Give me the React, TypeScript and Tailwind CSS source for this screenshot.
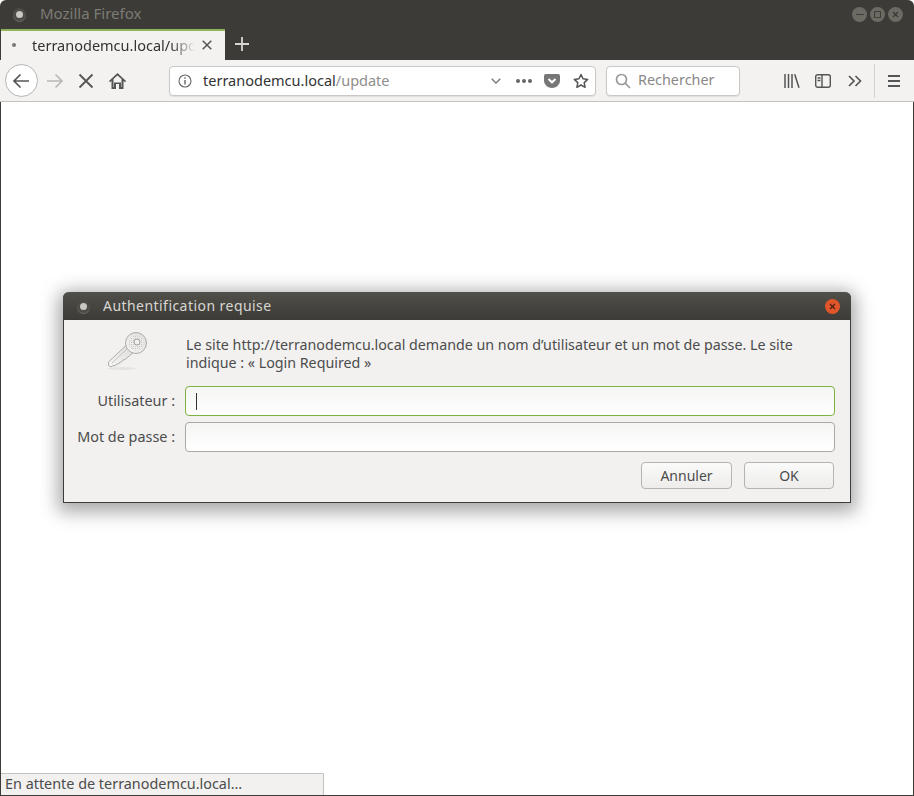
const font = "font-['Noto_Sans',sans-serif]";

function WindowButtons() {
  return (
    <div className="flex items-center gap-[3px]">
      <div className="w-[15px] h-[15px] rounded-full bg-[#6b6a63] flex items-center justify-center">
        <div className="w-[8px] h-[1px] bg-[#3f3e39]" />
      </div>
      <div className="w-[15px] h-[15px] rounded-full bg-[#6b6a63] flex items-center justify-center">
        <div className="w-[7px] h-[7px] border border-[#3f3e39]" />
      </div>
      <div className="w-[15px] h-[15px] rounded-full bg-[#6b6a63] flex items-center justify-center">
        <svg width="7" height="7" viewBox="0 0 7 7" stroke="#3a3935" strokeWidth="1.2">
          <path d="M1 1l5 5M6 1l-5 5" />
        </svg>
      </div>
    </div>
  );
}

function AppDot() {
  return (
    <div className="w-[13px] h-[13px] rounded-full bg-[#4d4c46] flex items-center justify-center shadow-[0_1px_0_#6a6963]">
      <div className="w-[7px] h-[7px] rounded-full bg-[#c9c8c2]" />
    </div>
  );
}

function Toolbar() {
  return (
    <div className="h-[42px] bg-[#f3f2f1] border-b border-[#c4c3c0] flex items-center shrink-0 relative">
      <div className="w-[33px] h-[33px] ml-[5px] rounded-full bg-white border border-[#b5b4b1] flex items-center justify-center">
        <svg className="-ml-[2px]" width="18" height="16" viewBox="0 0 18 16" fill="none" stroke="#555" strokeWidth="1.7">
          <path d="M17 8H2M8.500 1.500L2 8l6.500 6.500" />
        </svg>
      </div>
      <svg className="ml-[8px]" width="18" height="16" viewBox="0 0 18 16" fill="none" stroke="#b9b8b5" strokeWidth="1.7">
        <path d="M1 8h15M9.500 1.500L16 8l-6.500 6.500" />
      </svg>
      <svg className="ml-[14px]" width="16" height="16" viewBox="0 0 16 16" fill="none" stroke="#555" strokeWidth="1.8">
        <path d="M1.500 1.500l13 13M14.500 1.500l-13 13" />
      </svg>
      <svg className="ml-[15px]" width="17" height="16" viewBox="0 0 17 16" fill="#555">
        <path d="M8.500 0L0 8l1 1.200 1.500-1.300V16h4.500v-5h3v5H14.500V7.900L16 9.200 17 8zM4.500 14V6.100l4-3.700 4 3.700V14H12V9.500H5V14z" fillRule="evenodd" />
      </svg>

      <div className="ml-[43px] w-[427px] h-[30px] bg-white border border-[#c9c8c5] rounded-[4px] flex items-center shadow-[0_1px_1px_rgba(0,0,0,0.08)]">
        <svg className="ml-[8px]" width="14" height="14" viewBox="0 0 14 14" fill="none" stroke="#666" strokeWidth="1.100">
          <circle cx="7" cy="7" r="6" />
          <path d="M7 6v4.500M7 3.300v1.400" strokeWidth="1.400" />
        </svg>
        <span className="ml-[11px] text-[14.5px] leading-none text-[#333] whitespace-nowrap">
          terranodemcu.local<span className="text-[#8f8e8c]">/update</span>
        </span>
        <svg className="ml-auto" width="10" height="6" viewBox="0 0 10 6" fill="none" stroke="#777" strokeWidth="1.300">
          <path d="M.7.700L5 5l4.300-4.300" />
        </svg>
        <div className="ml-[15px] flex gap-[2px]">
          <div className="w-[4px] h-[4px] rounded-full bg-[#666]" />
          <div className="w-[4px] h-[4px] rounded-full bg-[#666]" />
          <div className="w-[4px] h-[4px] rounded-full bg-[#666]" />
        </div>
        <svg className="ml-[12px]" width="16" height="14" viewBox="0 0 16 14">
          <path d="M2 0h12a2 2 0 0 1 2 2v4.500C16 11 12 14 8 14S0 11 0 6.500V2a2 2 0 0 1 2-2z" fill="#777" />
          <path d="M4.500 5L8 8.300 11.500 5" fill="none" stroke="#fff" strokeWidth="2" />
        </svg>
        <svg className="ml-[13px] mr-[6px]" width="16" height="16" viewBox="0 0 16 16" fill="none" stroke="#555" strokeWidth="1.500">
          <path d="M8 1.500l2 4.300 4.700.6-3.500 3.200.9 4.700L8 12l-4.100 2.300.9-4.700L1.300 6.400 6 5.800z" strokeLinejoin="round" />
        </svg>
      </div>

      <div className="ml-[10px] w-[134px] h-[30px] bg-white border border-[#c9c8c5] rounded-[4px] flex items-center shadow-[0_1px_1px_rgba(0,0,0,0.08)]">
        <svg className="ml-[8px]" width="16" height="16" viewBox="0 0 16 16" fill="none" stroke="#9b9a98" strokeWidth="1.700">
          <circle cx="6.500" cy="6.500" r="5" />
          <path d="M10.200 10.200L15 15" />
        </svg>
        <span className="ml-[7px] text-[14.4px] leading-none text-[#8a8987]">Rechercher</span>
      </div>

      <svg className="ml-[44px]" width="16" height="14" viewBox="0 0 16 14" stroke="#555" strokeWidth="1.500" fill="none">
        <path d="M1 0v14M4.500 0v14M8 0v14M10.700.3l4.300 13.500" />
      </svg>
      <svg className="ml-[15px]" width="16" height="14" viewBox="0 0 16 14" fill="none" stroke="#555" strokeWidth="1.400">
        <rect x=".7" y=".7" width="14.600" height="12.600" rx="2" />
        <path d="M7 .7v12.600M2.500 4h3M2.500 6.500h3" />
      </svg>
      <svg className="ml-[17px]" width="14" height="12" viewBox="0 0 14 12" fill="none" stroke="#555" strokeWidth="1.700">
        <path d="M1 1l5 5-5 5M7.500 1l5 5-5 5" />
      </svg>
      <div className="ml-[12px] w-[1px] h-[34px] bg-[#d3d2cf]" />
      <div className="ml-[13px] w-[12px] flex flex-col gap-[3px]">
        <div className="h-[2px] bg-[#555]" />
        <div className="h-[2px] bg-[#555]" />
        <div className="h-[2px] bg-[#555]" />
      </div>
    </div>
  );
}

function KeyIcon() {
  return (
    <svg width="42" height="42" viewBox="0 0 42 42">
      <defs>
        <linearGradient id="keyg" x1="0" y1="1" x2="1" y2="0">
          <stop offset="0" stopColor="#f6f6f4" />
          <stop offset="1" stopColor="#dcdbd8" />
        </linearGradient>
        <pattern id="keyh" width="2" height="2" patternUnits="userSpaceOnUse">
          <rect width="2" height="2" fill="#eeedeb" />
          <rect width="1" height="1" fill="#c6c5c1" />
        </pattern>
      </defs>
      <ellipse cx="15" cy="38.500" rx="14" ry="1.500" fill="#e4e3e1" />
      <path
        d="M20.500 14L1.500 32v3.500L4 37l2-1.500 2 .5 1.500-2h2l1.500-2h1.500l1.500-2 2-.5L27 22z"
        fill="url(#keyg)"
        stroke="#aeada9"
        strokeLinejoin="round"
      />
      <path d="M5 33l15-14" stroke="#c4c3bf" fill="none" />
      <circle cx="29" cy="13" r="10.500" fill="url(#keyg)" stroke="#aeada9" />
      <circle cx="29" cy="13" r="7.500" fill="url(#keyh)" />
      <circle cx="30" cy="12" r="3" fill="#f0efed" stroke="#a3a29e" />
    </svg>
  );
}

function Field({ label, focused }: { label: string; focused?: boolean }) {
  return (
    <div className="flex items-center">
      <span className="w-[111px] text-right text-[14.4px] text-[#4c4c4c] whitespace-nowrap">{label}</span>
      <div
        className={
          focused
            ? "ml-[10px] w-[650px] h-[30px] rounded-[4px] border border-[#7cb342] bg-gradient-to-b from-[#f5f5f4] to-white flex items-center"
            : "ml-[10px] w-[650px] h-[30px] rounded-[4px] border border-[#aaa9a6] bg-gradient-to-b from-[#f5f5f4] to-white flex items-center"
        }
      >
        {focused && <div className="ml-[10px] w-[1px] h-[17px] bg-[#333]" />}
      </div>
    </div>
  );
}

function DialogButton({ label }: { label: string }) {
  return (
    <div className="h-[27px] rounded-[4px] border border-[#b5b4b1] bg-gradient-to-b from-[#fafafa] to-[#eeedeb] flex items-center justify-center text-[14px] text-[#4c4c4c]">
      {label}
    </div>
  );
}

function AuthDialog() {
  return (
    <div className="absolute left-[63px] top-[292px] w-[788px] h-[211px] rounded-t-[6px] border border-[#3d3c38] border-t-0 bg-[#f2f1f0] shadow-[0_4px_18px_5px_rgba(0,0,0,0.34)] flex flex-col">
      <div className="h-[28px] -mx-[1px] rounded-t-[6px] bg-gradient-to-b from-[#504f49] to-[#3c3b37] flex items-center shrink-0">
        <div className="ml-[14px]">
          <AppDot />
        </div>
        <span className="ml-[13px] pb-[1px] text-[14px] tracking-[0.45px] text-[#d8d7d3]">Authentification requise</span>
        <div className="ml-auto mr-[11px] w-[15px] h-[15px] rounded-full bg-[#e0552a] flex items-center justify-center">
          <svg width="7" height="7" viewBox="0 0 7 7" stroke="#4a2010" strokeWidth="1.200">
            <path d="M1 1l5 5M6 1l-5 5" />
          </svg>
        </div>
      </div>
      <div className="flex pt-[10px] shrink-0">
        <div className="ml-[43px] w-[42px]">
          <KeyIcon />
        </div>
        <p className="ml-[37px] mt-[6px] w-[625px] text-[14.25px] leading-[18px] text-[#4c4c4c]">
          Le site http://terranodemcu.local demande un nom d’utilisateur et un mot de passe. Le site indique : « Login Required »
        </p>
      </div>
      <div className="mt-[14px] flex flex-col gap-[6px]">
        <Field label="Utilisateur :" focused />
        <Field label="Mot de passe :" />
      </div>
      <div className="mt-[10px] mr-[16px] flex justify-end gap-[12px]">
        <div className="w-[91px]">
          <DialogButton label="Annuler" />
        </div>
        <div className="w-[90px]">
          <DialogButton label="OK" />
        </div>
      </div>
    </div>
  );
}

export default function App() {
  return (
    <div className={`w-[914px] h-[796px] bg-white relative overflow-hidden flex flex-col ${font}`}>
      <div className="h-[29px] bg-[#3c3b37] rounded-t-[6px] flex items-center shrink-0">
        <div className="ml-[13px]">
          <AppDot />
        </div>
        <span className="ml-[14px] pb-[2px] text-[15px] text-[#7c7b75]">Mozilla Firefox</span>
        <div className="ml-auto mr-[11px]">
          <WindowButtons />
        </div>
      </div>
      <div className="h-[31px] bg-[#3c3b37] flex items-stretch shrink-0">
        <div className="ml-[1px] w-[224px] bg-[#f3f2f1] border-t-[2px] border-[#8fb35a] pb-[2px] flex items-center">
          <div className="ml-[11px] w-[4px] h-[4px] rounded-full bg-[#777]" />
          <span className="ml-[16px] w-[163px] overflow-hidden whitespace-nowrap text-[14.5px] leading-[20px] text-[#333] [mask-image:linear-gradient(to_right,black_85%,transparent)]">
            terranodemcu.local/update
          </span>
          <svg className="ml-[7px]" width="10" height="10" viewBox="0 0 10 10" stroke="#555" strokeWidth="1.500">
            <path d="M.7.700l8.600 8.600M9.300.700L.7 9.300" />
          </svg>
        </div>
        <div className="ml-[10px] pb-[2px] flex items-center">
          <svg width="14" height="14" viewBox="0 0 14 14" stroke="#d8d7d3" strokeWidth="1.800">
            <path d="M7 0v14M0 7h14" />
          </svg>
        </div>
      </div>
      <Toolbar />
      <div className="flex-1 border-x border-b border-[#3c3b37] flex flex-col justify-end">
        <div className="w-[323px] h-[22px] bg-[#f2f1f0] border-t border-r border-[#c4c3c0] flex items-center">
          <span className="ml-[4px] text-[14.4px] leading-none text-[#4c4c4c] whitespace-nowrap">En attente de terranodemcu.local…</span>
        </div>
      </div>
      <AuthDialog />
    </div>
  );
}
